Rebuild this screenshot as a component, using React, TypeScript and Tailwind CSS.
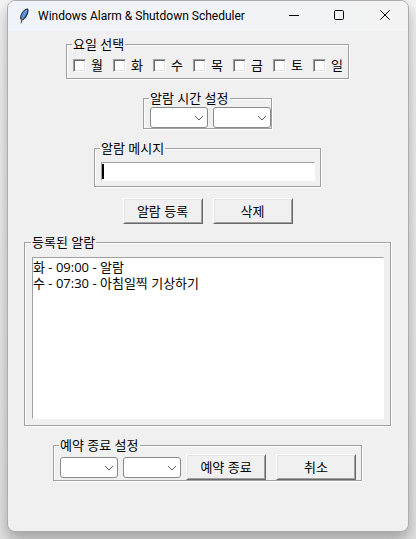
import { useState } from "react";
import type { ReactNode } from "react";

const days = ["월", "화", "수", "목", "금", "토", "일"];
const hours = Array.from({ length: 24 }, (_, i) => String(i).padStart(2, "0"));
const minutes = Array.from({ length: 60 }, (_, i) => String(i).padStart(2, "0"));
const alarms = ["화 - 09:00 - 알람", "수 - 07:30 - 아침일찍 기상하기"];

interface GroupProps {
  title: string;
  className: string;
  children: ReactNode;
}

// Etched frame: a grey line with a white one below and to the right of it
function Group({ title, className, children }: GroupProps) {
  return (
    <fieldset
      className={`border border-[#a0a0a0] shadow-[1px_1px_0_#fff,inset_1px_1px_0_#fff] ${className}`}
    >
      <legend className="-ml-px h-[17px] whitespace-nowrap bg-[#f0f0f0] px-px leading-[17px]">
        {title}
      </legend>
      {children}
    </fieldset>
  );
}

function Combo({ label, values }: { label: string; values: string[] }) {
  return (
    <div className="relative h-[21px] w-[58px]">
      <select
        aria-label={label}
        defaultValue=""
        className="block h-full w-full appearance-none rounded-[3px] border border-[#8a8a8a] bg-white pl-1 leading-[17px]"
      >
        <option value="" />
        {values.map((v) => (
          <option key={v}>{v}</option>
        ))}
      </select>
      <svg
        className="pointer-events-none absolute right-1 top-2 h-[6px] w-[10px]"
        viewBox="0 0 10 6"
        fill="none"
        stroke="#5c5c5c"
      >
        <path d="M1 1l4 4 4-4" />
      </svg>
    </div>
  );
}

function PushButton({ children }: { children: ReactNode }) {
  return (
    <button
      type="button"
      className="h-[26px] w-20 border border-b-[#696969] border-l-white border-r-[#696969] border-t-white bg-[#f0f0f0] leading-[22px] shadow-[inset_1px_1px_0_#e3e3e3,inset_-1px_-1px_0_#a0a0a0]"
    >
      {children}
    </button>
  );
}

function TitleBar() {
  return (
    <header className="flex h-[30px] items-center bg-linear-to-r from-[#f0f3fa] to-[#f3f3f3] pl-[10px]">
      <svg className="h-4 w-3 shrink-0" viewBox="0 0 12 16">
        <path
          d="M9.8.6c1.2.8.9 3.6-.3 6.2C8.300 9.500 6.300 11.800 4.100 12.600L3.300 15.500 2.700 15.400 3 12.200C1.700 10.500 1.900 7.800 3.600 5 5.300 2.300 8 .2 9.800.6z"
          fill="#1c2733"
        />
        <path
          d="M9.200 1.500c.7 1-.1 3.600-1.300 5.700C6.900 9 5.600 10.700 4.300 11.300c0-2.200 1.800-5.600 4-8.500C6.200 4.800 4.300 7.500 3.300 10.400 2.600 8.900 3.300 6.600 4.800 4.500 6.300 2.500 8.300 1.200 9.200 1.500z"
          fill="#4a90e0"
        />
        <path d="M8.600 2.400C6.400 5 4.500 8.200 3.500 12.500" stroke="#c9def5" strokeWidth=".6" fill="none" />
      </svg>
      <h1 className="ml-2 whitespace-nowrap font-['Roboto','Liberation_Sans',sans-serif] text-[12px] leading-4">
        Windows Alarm &amp; Shutdown Scheduler
      </h1>
      <div className="ml-auto flex self-start">
        <button type="button" aria-label="Minimize" className="grid h-7 w-11 place-items-center">
          <svg className="size-[10px]" viewBox="0 0 10 10" stroke="#000">
            <path d="M0 5.500h10" />
          </svg>
        </button>
        <button type="button" aria-label="Maximize" className="grid h-7 w-[46px] place-items-center">
          <svg className="size-[10px]" viewBox="0 0 10 10" fill="none" stroke="#000">
            <rect x=".5" y=".5" width="9" height="9" rx="1.200" />
          </svg>
        </button>
        <button type="button" aria-label="Close" className="grid h-7 w-[46px] place-items-center">
          <svg className="size-[10px]" viewBox="0 0 10 10" stroke="#000">
            <path d="M.3.3l9.400 9.400M9.700.3L.3 9.700" />
          </svg>
        </button>
      </div>
    </header>
  );
}

export default function App() {
  const [message, setMessage] = useState("");

  return (
    <div className="min-h-screen overflow-hidden bg-linear-to-b from-[#f4f4f4] to-[#e4e4e4] px-[7px] pb-[7px] font-['Open_Sans','Noto_Sans_CJK_KR',sans-serif] text-[13px] text-black">
      <div className="rounded-[8px] border border-[#adadad] bg-[#f0f0f0] shadow-[0_8px_16px_rgba(0,0,0,0.3)]">
        <div className="overflow-hidden rounded-t-[7px]">
          <TitleBar />
        </div>
        <main className="flex flex-col items-center pb-[50px] pr-px pt-[5px]">
          <Group title="요일 선택" className="pb-0.5 pl-1.5 pr-[3px] pt-0.5">
            <div className="flex h-[21px]">
              {days.map((day) => (
                <label key={day} className="flex w-10 items-center gap-[5px] last:w-8">
                  <input
                    type="checkbox"
                    className="size-[13px] shrink-0 appearance-none border border-b-white border-l-[#a0a0a0] border-r-white border-t-[#a0a0a0] bg-white shadow-[inset_1px_1px_0_#696969,inset_-1px_-1px_0_#e3e3e3] checked:bg-[#1f2937]"
                  />
                  <span className="leading-[17px]">{day}</span>
                </label>
              ))}
            </div>
          </Group>

          <Group title="알람 시간 설정" className="mt-[11px] pl-1.5">
            <div className="flex gap-[5px]">
              <Combo label="알람 시" values={hours} />
              <Combo label="알람 분" values={minutes} />
            </div>
          </Group>

          <Group title="알람 메시지" className="mt-[11px] pb-[5px] pl-1.5 pr-[5px] pt-[5px]">
            <div className="relative h-[19px] w-[214px]">
              <input
                type="text"
                aria-label="알람 메시지"
                value={message}
                onChange={(e) => setMessage(e.target.value)}
                className="block h-full w-full border border-b-white border-l-[#a0a0a0] border-r-white border-t-[#a0a0a0] bg-white px-1 outline-none"
              />
              {/* block insertion cursor */}
              {message === "" && (
                <span className="pointer-events-none absolute left-px top-0.5 h-[15px] w-0.5 bg-black" />
              )}
            </div>
          </Group>

          <div className="mt-[11px] flex gap-2.5">
            <PushButton>알람 등록</PushButton>
            <PushButton>삭제</PushButton>
          </div>

          <div className="mt-2.5 w-full px-4">
            <Group title="등록된 알람" className="pb-1.5 pl-[7px] pr-1.5 pt-1.5">
              <select
                size={10}
                aria-label="등록된 알람"
                className="block h-[162px] w-full appearance-none overflow-hidden border border-b-white border-l-[#a0a0a0] border-r-white border-t-[#a0a0a0] bg-white outline-none"
              >
                {alarms.map((alarm) => (
                  <option key={alarm} className="flex h-4 items-center p-0">
                    {alarm}
                  </option>
                ))}
              </select>
            </Group>
          </div>

          <Group title="예약 종료 설정" className="mt-[11px] pl-1.5 pr-[5px]">
            <div className="flex items-center">
              <div className="mr-[5px] flex gap-[5px]">
                <Combo label="종료 시" values={hours} />
                <Combo label="종료 분" values={minutes} />
              </div>
              <div className="flex gap-2.5">
                <PushButton>예약 종료</PushButton>
                <PushButton>취소</PushButton>
              </div>
            </div>
          </Group>
        </main>
      </div>
    </div>
  );
}
